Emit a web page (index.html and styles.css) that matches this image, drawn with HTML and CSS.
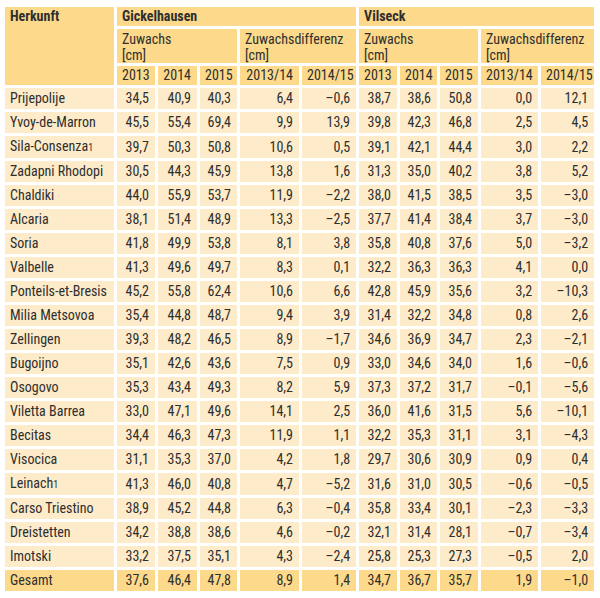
FILE: index.html
```html
<!DOCTYPE html>
<html lang="de">
<head>
<meta charset="utf-8">
<title>Zuwachs</title>
<link rel="stylesheet" href="styles.css">
</head>
<body>
<table class="tbl">
  <colgroup>
    <col class="c-name">
    <col class="c-y1"><col class="c-y2"><col class="c-y3"><col class="c-d1"><col class="c-d2">
    <col class="c-y4"><col class="c-y5"><col class="c-y6"><col class="c-d3"><col class="c-d4">
  </colgroup>
  <thead>
    <tr class="h1">
      <th rowspan="3" class="lbl">Herkunft</th>
      <th colspan="5" class="lbl">Gickelhausen</th>
      <th colspan="5" class="lbl">Vilseck</th>
    </tr>
    <tr class="h2">
      <th colspan="3" class="sub">Zuwachs<br>[cm]</th>
      <th colspan="2" class="sub">Zuwachsdifferenz<br>[cm]</th>
      <th colspan="3" class="sub">Zuwachs<br>[cm]</th>
      <th colspan="2" class="sub">Zuwachsdifferenz<br>[cm]</th>
    </tr>
    <tr class="h3">
      <th>2013</th><th>2014</th><th>2015</th><th>2013/14</th><th>2014/15</th>
      <th>2013</th><th>2014</th><th>2015</th><th>2013/14</th><th>2014/15</th>
    </tr>
  </thead>
  <tbody>
    <tr><td>Prijepolije</td><td>34,5</td><td>40,9</td><td>40,3</td><td>6,4</td><td>–0,6</td><td>38,7</td><td>38,6</td><td>50,8</td><td>0,0</td><td>12,1</td></tr>
    <tr><td>Yvoy-de-Marron</td><td>45,5</td><td>55,4</td><td>69,4</td><td>9,9</td><td>13,9</td><td>39,8</td><td>42,3</td><td>46,8</td><td>2,5</td><td>4,5</td></tr>
    <tr><td>Sila-Consenza<span class="fn">1</span></td><td>39,7</td><td>50,3</td><td>50,8</td><td>10,6</td><td>0,5</td><td>39,1</td><td>42,1</td><td>44,4</td><td>3,0</td><td>2,2</td></tr>
    <tr><td>Zadapni Rhodopi</td><td>30,5</td><td>44,3</td><td>45,9</td><td>13,8</td><td>1,6</td><td>31,3</td><td>35,0</td><td>40,2</td><td>3,8</td><td>5,2</td></tr>
    <tr><td>Chaldiki</td><td>44,0</td><td>55,9</td><td>53,7</td><td>11,9</td><td>–2,2</td><td>38,0</td><td>41,5</td><td>38,5</td><td>3,5</td><td>–3,0</td></tr>
    <tr><td>Alcaria</td><td>38,1</td><td>51,4</td><td>48,9</td><td>13,3</td><td>–2,5</td><td>37,7</td><td>41,4</td><td>38,4</td><td>3,7</td><td>–3,0</td></tr>
    <tr><td>Soria</td><td>41,8</td><td>49,9</td><td>53,8</td><td>8,1</td><td>3,8</td><td>35,8</td><td>40,8</td><td>37,6</td><td>5,0</td><td>–3,2</td></tr>
    <tr><td>Valbelle</td><td>41,3</td><td>49,6</td><td>49,7</td><td>8,3</td><td>0,1</td><td>32,2</td><td>36,3</td><td>36,3</td><td>4,1</td><td>0,0</td></tr>
    <tr><td>Ponteils-et-Bresis</td><td>45,2</td><td>55,8</td><td>62,4</td><td>10,6</td><td>6,6</td><td>42,8</td><td>45,9</td><td>35,6</td><td>3,2</td><td>–10,3</td></tr>
    <tr><td>Milia Metsovoa</td><td>35,4</td><td>44,8</td><td>48,7</td><td>9,4</td><td>3,9</td><td>31,4</td><td>32,2</td><td>34,8</td><td>0,8</td><td>2,6</td></tr>
    <tr><td>Zellingen</td><td>39,3</td><td>48,2</td><td>46,5</td><td>8,9</td><td>–1,7</td><td>34,6</td><td>36,9</td><td>34,7</td><td>2,3</td><td>–2,1</td></tr>
    <tr><td>Bugoijno</td><td>35,1</td><td>42,6</td><td>43,6</td><td>7,5</td><td>0,9</td><td>33,0</td><td>34,6</td><td>34,0</td><td>1,6</td><td>–0,6</td></tr>
    <tr><td>Osogovo</td><td>35,3</td><td>43,4</td><td>49,3</td><td>8,2</td><td>5,9</td><td>37,3</td><td>37,2</td><td>31,7</td><td>–0,1</td><td>–5,6</td></tr>
    <tr><td>Viletta Barrea</td><td>33,0</td><td>47,1</td><td>49,6</td><td>14,1</td><td>2,5</td><td>36,0</td><td>41,6</td><td>31,5</td><td>5,6</td><td>–10,1</td></tr>
    <tr><td>Becitas</td><td>34,4</td><td>46,3</td><td>47,3</td><td>11,9</td><td>1,1</td><td>32,2</td><td>35,3</td><td>31,1</td><td>3,1</td><td>–4,3</td></tr>
    <tr><td>Visocica</td><td>31,1</td><td>35,3</td><td>37,0</td><td>4,2</td><td>1,8</td><td>29,7</td><td>30,6</td><td>30,9</td><td>0,9</td><td>0,4</td></tr>
    <tr><td>Leinach<span class="fn">1</span></td><td>41,3</td><td>46,0</td><td>40,8</td><td>4,7</td><td>–5,2</td><td>31,6</td><td>31,0</td><td>30,5</td><td>–0,6</td><td>–0,5</td></tr>
    <tr><td>Carso Triestino</td><td>38,9</td><td>45,2</td><td>44,8</td><td>6,3</td><td>–0,4</td><td>35,8</td><td>33,4</td><td>30,1</td><td>–2,3</td><td>–3,3</td></tr>
    <tr><td>Dreistetten</td><td>34,2</td><td>38,8</td><td>38,6</td><td>4,6</td><td>–0,2</td><td>32,1</td><td>31,4</td><td>28,1</td><td>–0,7</td><td>–3,4</td></tr>
    <tr><td>Imotski</td><td>33,2</td><td>37,5</td><td>35,1</td><td>4,3</td><td>–2,4</td><td>25,8</td><td>25,3</td><td>27,3</td><td>–0,5</td><td>2,0</td></tr>
    <tr class="total"><td>Gesamt</td><td>37,6</td><td>46,4</td><td>47,8</td><td>8,9</td><td>1,4</td><td>34,7</td><td>36,7</td><td>35,7</td><td>1,9</td><td>–1,0</td></tr>
  </tbody>
</table>
</body>
</html>
```
FILE: styles.css
```css
html, body {
  margin: 0;
  padding: 0;
  background: #ffffff;
}

body {
  font-family: "Liberation Sans Narrow", "Roboto Condensed", "Liberation Sans", sans-serif;
  font-size: 14px;
  color: #2e2e2e;
}

.tbl {
  margin: 4px 0 0 2px;
  border-collapse: separate;
  border-spacing: 3px;
  table-layout: fixed;
  width: 595px;
}

.c-name { width: 109px; }
.c-y1 { width: 38px; }
.c-y2 { width: 39px; }
.c-y3 { width: 37px; }
.c-d1 { width: 59px; }
.c-d2 { width: 54px; }
.c-y4 { width: 38px; }
.c-y5 { width: 37px; }
.c-y6 { width: 38px; }
.c-d3 { width: 57px; }
.c-d4 { width: 53px; }

.tbl th,
.tbl td {
  padding: 0 6px 0 5px;
  white-space: nowrap;
  overflow: hidden;
}

.tbl th {
  background: #fcd98b;
  font-weight: normal;
  text-align: right;
  vertical-align: top;
}

.tbl th.lbl {
  font-weight: bold;
  text-align: left;
}

.tbl th.sub {
  text-align: left;
  line-height: 16px;
  padding-top: 2px;
}

.h1 th { height: 19px; line-height: 19px; }
.h2 th { height: 32px; }
.h3 th { height: 19px; line-height: 19px; }

.tbl td {
  background: #fdebc9;
  height: 21px;
  line-height: 21px;
  text-align: right;
}

.tbl td:first-child {
  text-align: left;
}

.tbl tr.total td {
  background: #fcd98b;
}

.fn {
  font-size: 10px;
}
```
